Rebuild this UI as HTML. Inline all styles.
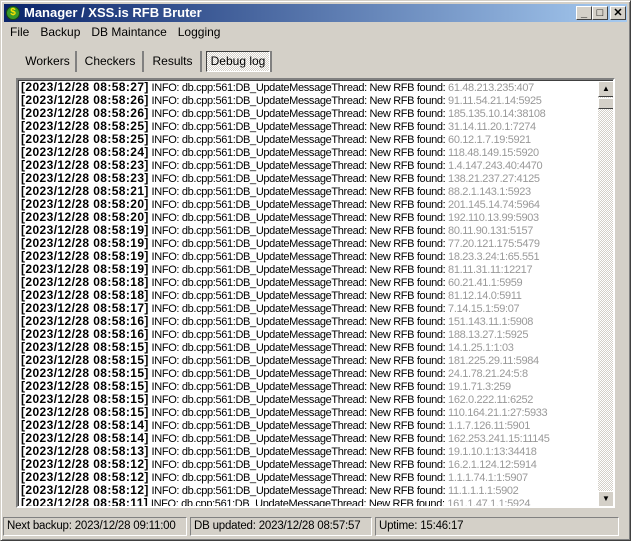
<!DOCTYPE html>
<html><head><meta charset="utf-8"><style>
*{margin:0;padding:0;box-sizing:border-box}
body{width:631px;height:541px;background:#d4d0c8;font-family:"Liberation Sans",Arial,sans-serif;font-size:12px;position:relative;overflow:hidden}
.win{position:absolute;left:0;top:0;width:631px;height:541px;border:1px solid;border-color:#d4d0c8 #404040 #404040 #d4d0c8;box-shadow:inset 1px 1px #fff,inset -1px -1px #808080}
.title{position:absolute;left:4px;top:4px;width:623px;height:18px;background:linear-gradient(to right,#0a246a,#a6caf0);color:#fff;font-weight:bold;font-size:13px;line-height:18px;padding-left:20px}
.ico{position:absolute;left:2px;top:2px;width:14px;height:14px;border-radius:50%;background:#3a9a2a;border:1px solid #1a4a10;color:#ffe000;font-size:10px;line-height:12px;text-align:center}
.btn{position:absolute;top:6px;width:16px;height:14px;background:#d4d0c8;border:1px solid;border-color:#fff #404040 #404040 #fff;font-size:11px;color:#000;line-height:12px;text-align:center;font-weight:bold}
.menu{position:absolute;top:25px;left:10px;font-size:12px}
.menu span{margin-right:11px}
.tab{position:absolute;top:51px;height:21px;line-height:21px;font-size:12px;text-align:center;border-right:2px solid;border-right-color:#808080}
.tab.on{background:repeating-conic-gradient(#fff 0 25%,#d4d0c8 0 50%) 0 0/2px 2px;border:1px solid;border-color:#404040 #fff #fff #404040;line-height:19px}
.list{position:absolute;left:16px;top:78px;width:599px;height:430px;background:#fff;border:2px solid;border-color:#808080 #fff #fff #808080;box-shadow:inset 1px 1px #404040;overflow:hidden}
.rows{position:absolute;left:3px;top:1px;white-space:nowrap;font-size:11px;letter-spacing:-0.35px}
.rows div{height:13px;line-height:13px;overflow:visible}
.rows b{letter-spacing:0.4px;font-size:12px}
.ip{color:#999}
.sb{position:absolute;left:580px;top:1px;width:16px;height:426px;background:repeating-conic-gradient(#fff 0 25%,#d4d0c8 0 50%) 0 0/2px 2px}
.sbb{position:absolute;left:0;width:16px;height:16px;background:#d4d0c8;border:1px solid;border-color:#fff #404040 #404040 #fff;font-size:8px;text-align:center;line-height:14px}
.status{position:absolute;top:517px;height:19px;border:1px solid;border-color:#808080 #fff #fff #808080;font-size:11.5px;line-height:17px;padding-left:3px;white-space:nowrap;overflow:hidden;letter-spacing:-0.2px}
</style></head><body>
<div class="win"></div>
<div class="title"><div class="ico">$</div>Manager / XSS.is RFB Bruter</div>
<div class="btn" style="left:576px">_</div>
<div class="btn" style="left:592px">□</div>
<div class="btn" style="left:610px">✕</div>
<div class="menu"><span>File</span><span>Backup</span><span>DB Maintance</span><span>Logging</span></div>
<div class="tab" style="left:20px;width:57px">Workers</div>
<div class="tab" style="left:78px;width:66px">Checkers</div>
<div class="tab" style="left:145px;width:57px">Results</div>
<div class="tab on" style="left:206px;width:64px">Debug log</div>
<div class="tab" style="left:270px;width:2px"></div>
<div class="list"><div class="rows">
<div><b>[2023/12/28 08:58:27]</b> INFO: db.cpp:561:DB_UpdateMessageThread: New RFB found: <span class="ip">61.48.213.235:407</span></div>
<div><b>[2023/12/28 08:58:26]</b> INFO: db.cpp:561:DB_UpdateMessageThread: New RFB found: <span class="ip">91.11.54.21.14:5925</span></div>
<div><b>[2023/12/28 08:58:26]</b> INFO: db.cpp:561:DB_UpdateMessageThread: New RFB found: <span class="ip">185.135.10.14:38108</span></div>
<div><b>[2023/12/28 08:58:25]</b> INFO: db.cpp:561:DB_UpdateMessageThread: New RFB found: <span class="ip">31.14.11.20.1:7274</span></div>
<div><b>[2023/12/28 08:58:25]</b> INFO: db.cpp:561:DB_UpdateMessageThread: New RFB found: <span class="ip">60.12.1.7.19:5921</span></div>
<div><b>[2023/12/28 08:58:24]</b> INFO: db.cpp:561:DB_UpdateMessageThread: New RFB found: <span class="ip">118.48.149.15:5920</span></div>
<div><b>[2023/12/28 08:58:23]</b> INFO: db.cpp:561:DB_UpdateMessageThread: New RFB found: <span class="ip">1.4.147.243.40:4470</span></div>
<div><b>[2023/12/28 08:58:23]</b> INFO: db.cpp:561:DB_UpdateMessageThread: New RFB found: <span class="ip">138.21.237.27:4125</span></div>
<div><b>[2023/12/28 08:58:21]</b> INFO: db.cpp:561:DB_UpdateMessageThread: New RFB found: <span class="ip">88.2.1.143.1:5923</span></div>
<div><b>[2023/12/28 08:58:20]</b> INFO: db.cpp:561:DB_UpdateMessageThread: New RFB found: <span class="ip">201.145.14.74:5964</span></div>
<div><b>[2023/12/28 08:58:20]</b> INFO: db.cpp:561:DB_UpdateMessageThread: New RFB found: <span class="ip">192.110.13.99:5903</span></div>
<div><b>[2023/12/28 08:58:19]</b> INFO: db.cpp:561:DB_UpdateMessageThread: New RFB found: <span class="ip">80.11.90.131:5157</span></div>
<div><b>[2023/12/28 08:58:19]</b> INFO: db.cpp:561:DB_UpdateMessageThread: New RFB found: <span class="ip">77.20.121.175:5479</span></div>
<div><b>[2023/12/28 08:58:19]</b> INFO: db.cpp:561:DB_UpdateMessageThread: New RFB found: <span class="ip">18.23.3.24:1:65.551</span></div>
<div><b>[2023/12/28 08:58:19]</b> INFO: db.cpp:561:DB_UpdateMessageThread: New RFB found: <span class="ip">81.11.31.11:12217</span></div>
<div><b>[2023/12/28 08:58:18]</b> INFO: db.cpp:561:DB_UpdateMessageThread: New RFB found: <span class="ip">60.21.41.1:5959</span></div>
<div><b>[2023/12/28 08:58:18]</b> INFO: db.cpp:561:DB_UpdateMessageThread: New RFB found: <span class="ip">81.12.14.0:5911</span></div>
<div><b>[2023/12/28 08:58:17]</b> INFO: db.cpp:561:DB_UpdateMessageThread: New RFB found: <span class="ip">7.14.15.1:59:07</span></div>
<div><b>[2023/12/28 08:58:16]</b> INFO: db.cpp:561:DB_UpdateMessageThread: New RFB found: <span class="ip">151.143.11.1:5908</span></div>
<div><b>[2023/12/28 08:58:16]</b> INFO: db.cpp:561:DB_UpdateMessageThread: New RFB found: <span class="ip">188.13.27.1:5925</span></div>
<div><b>[2023/12/28 08:58:15]</b> INFO: db.cpp:561:DB_UpdateMessageThread: New RFB found: <span class="ip">14.1.25.1:1:03</span></div>
<div><b>[2023/12/28 08:58:15]</b> INFO: db.cpp:561:DB_UpdateMessageThread: New RFB found: <span class="ip">181.225.29.11:5984</span></div>
<div><b>[2023/12/28 08:58:15]</b> INFO: db.cpp:561:DB_UpdateMessageThread: New RFB found: <span class="ip">24.1.78.21.24:5:8</span></div>
<div><b>[2023/12/28 08:58:15]</b> INFO: db.cpp:561:DB_UpdateMessageThread: New RFB found: <span class="ip">19.1.71.3:259</span></div>
<div><b>[2023/12/28 08:58:15]</b> INFO: db.cpp:561:DB_UpdateMessageThread: New RFB found: <span class="ip">162.0.222.11:6252</span></div>
<div><b>[2023/12/28 08:58:15]</b> INFO: db.cpp:561:DB_UpdateMessageThread: New RFB found: <span class="ip">110.164.21.1:27:5933</span></div>
<div><b>[2023/12/28 08:58:14]</b> INFO: db.cpp:561:DB_UpdateMessageThread: New RFB found: <span class="ip">1.1.7.126.11:5901</span></div>
<div><b>[2023/12/28 08:58:14]</b> INFO: db.cpp:561:DB_UpdateMessageThread: New RFB found: <span class="ip">162.253.241.15:11145</span></div>
<div><b>[2023/12/28 08:58:13]</b> INFO: db.cpp:561:DB_UpdateMessageThread: New RFB found: <span class="ip">19.1.10.1:13:34418</span></div>
<div><b>[2023/12/28 08:58:12]</b> INFO: db.cpp:561:DB_UpdateMessageThread: New RFB found: <span class="ip">16.2.1.124.12:5914</span></div>
<div><b>[2023/12/28 08:58:12]</b> INFO: db.cpp:561:DB_UpdateMessageThread: New RFB found: <span class="ip">1.1.1.74.1:1:5907</span></div>
<div><b>[2023/12/28 08:58:12]</b> INFO: db.cpp:561:DB_UpdateMessageThread: New RFB found: <span class="ip">11.1.1.1.1:5902</span></div>
<div><b>[2023/12/28 08:58:11]</b> INFO: db.cpp:561:DB_UpdateMessageThread: New RFB found: <span class="ip">161.1.47.1.1:5924</span></div>
</div>
<div class="sb"><div class="sbb" style="top:0">▲</div><div class="sbb" style="top:17px;height:11px"></div><div class="sbb" style="top:410px">▼</div></div>
</div>
<div class="status" style="left:3px;width:184px">Next backup: 2023/12/28 09:11:00</div>
<div class="status" style="left:190px;width:182px">DB updated: 2023/12/28 08:57:57</div>
<div class="status" style="left:375px;width:244px">Uptime: 15:46:17</div>
</body></html>
